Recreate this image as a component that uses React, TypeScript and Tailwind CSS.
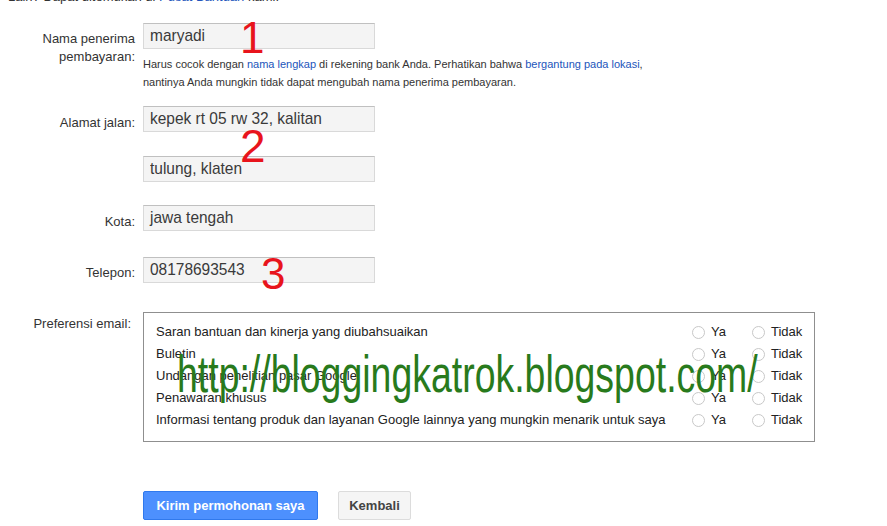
function Radio({ label, w }: { label: string; w: string }) {
  return (
    <div className={`flex items-center ${w}`}>
      <span className="w-[13px] h-[13px] rounded-full border border-[#c8c8c8] bg-white mr-[6px]" />
      <span>{label}</span>
    </div>
  );
}

const prefs = [
  "Saran bantuan dan kinerja yang diubahsuaikan",
  "Buletin",
  "Undangan penelitian pasar Google",
  "Penawaran khusus",
  "Informasi tentang produk dan layanan Google lainnya yang mungkin menarik untuk saya",
];

function Field({ value, className = "" }: { value: string; className?: string }) {
  return (
    <div
      className={`w-[232px] h-[26px] flex items-center pl-[6px] bg-[#f4f4f4] border border-[#d9d9d9] border-t-[#c0c0c0] text-[17px] text-[#3a3a3a] ${className}`}
    >
      <span className="inline-block whitespace-nowrap origin-left scale-x-[0.91]">{value}</span>
    </div>
  );
}

export default function App() {
  return (
    <div className="relative w-[887px] h-[526px] overflow-hidden bg-white font-['Liberation_Sans',Arial,sans-serif] text-[13px] text-[#333]">
      {/* cut-off intro line */}
      <p className="-mt-[11px] ml-[8px] leading-[15px]">
        Lain? Dapat ditemukan di <span className="text-[#2255bb]">Pusat Bantuan</span> kami.
      </p>

      {/* Nama penerima */}
      <div className="flex mt-[19px]">
        <div className="w-[135px] text-right pt-[7px] leading-[18px]">
          Nama penerima
          <br />
          pembayaran:
        </div>
        <div className="ml-[8px]">
          <Field value="maryadi" />
          <p className="mt-[6px] text-[11px] leading-[18px] text-[#333]">
            Harus cocok dengan <span className="text-[#2255bb]">nama lengkap</span> di rekening bank Anda. Perhatikan
            bahwa <span className="text-[#2255bb]">bergantung pada lokasi</span>,
            <br />
            nantinya Anda mungkin tidak dapat mengubah nama penerima pembayaran.
          </p>
        </div>
      </div>

      {/* Alamat */}
      <div className="flex mt-[15px]">
        <div className="w-[135px] text-right pt-[8px] leading-[18px]">Alamat jalan:</div>
        <div className="ml-[8px]">
          <Field value="kepek rt 05 rw 32, kalitan" />
          <Field value="tulung, klaten" className="mt-[24px]" />
        </div>
      </div>

      {/* Kota */}
      <div className="flex mt-[23px]">
        <div className="w-[135px] text-right pt-[8px] leading-[18px]">Kota:</div>
        <div className="ml-[8px]">
          <Field value="jawa tengah" />
        </div>
      </div>

      {/* Telepon */}
      <div className="flex mt-[26px]">
        <div className="w-[135px] text-right pt-[7px] leading-[18px]">Telepon:</div>
        <div className="ml-[8px]">
          <Field value="08178693543" />
        </div>
      </div>

      {/* Preferensi email */}
      <div className="flex mt-[29px]">
        <div className="w-[135px] text-right pt-[3px] pr-[4px] leading-[18px]">Preferensi email:</div>
        <div className="ml-[8px] w-[672px] border border-[#8f8f8f] pl-[12px] pt-[8px] pb-[10px] text-[#222]">
          {prefs.map((p) => (
            <div key={p} className="flex items-center h-[22px]">
              <span className="flex-1">{p}</span>
              <Radio label="Ya" w="w-[60px]" />
              <Radio label="Tidak" w="w-[62px]" />
            </div>
          ))}
        </div>
      </div>

      {/* Buttons */}
      <div className="flex mt-[49px] ml-[143px] gap-[20px]">
        <button className="w-[175px] h-[29px] rounded-[2px] bg-[#4d90fe] border border-[#3079ed] text-white font-bold text-[13px]">
          Kirim permohonan saya
        </button>
        <button className="w-[73px] h-[29px] rounded-[2px] bg-[#f5f5f5] border border-[#dcdcdc] text-[#444] font-bold text-[13px]">
          Kembali
        </button>
      </div>

      {/* red annotation numbers */}
      <span className="absolute left-[240px] top-[16px] text-[44px] leading-none text-[#e8141c]">1</span>
      <span className="absolute left-[240px] top-[123px] text-[46px] leading-none text-[#e8141c]">2</span>
      <span className="absolute left-[261px] top-[252px] text-[44px] leading-none text-[#e8141c]">3</span>

      {/* green watermark */}
      <span className="absolute left-[177px] top-[348px] text-[52px] leading-none text-[#287a1c] whitespace-nowrap origin-left scale-x-[0.72]">
        http://bloggingkatrok.blogspot.com/
      </span>
    </div>
  );
}
